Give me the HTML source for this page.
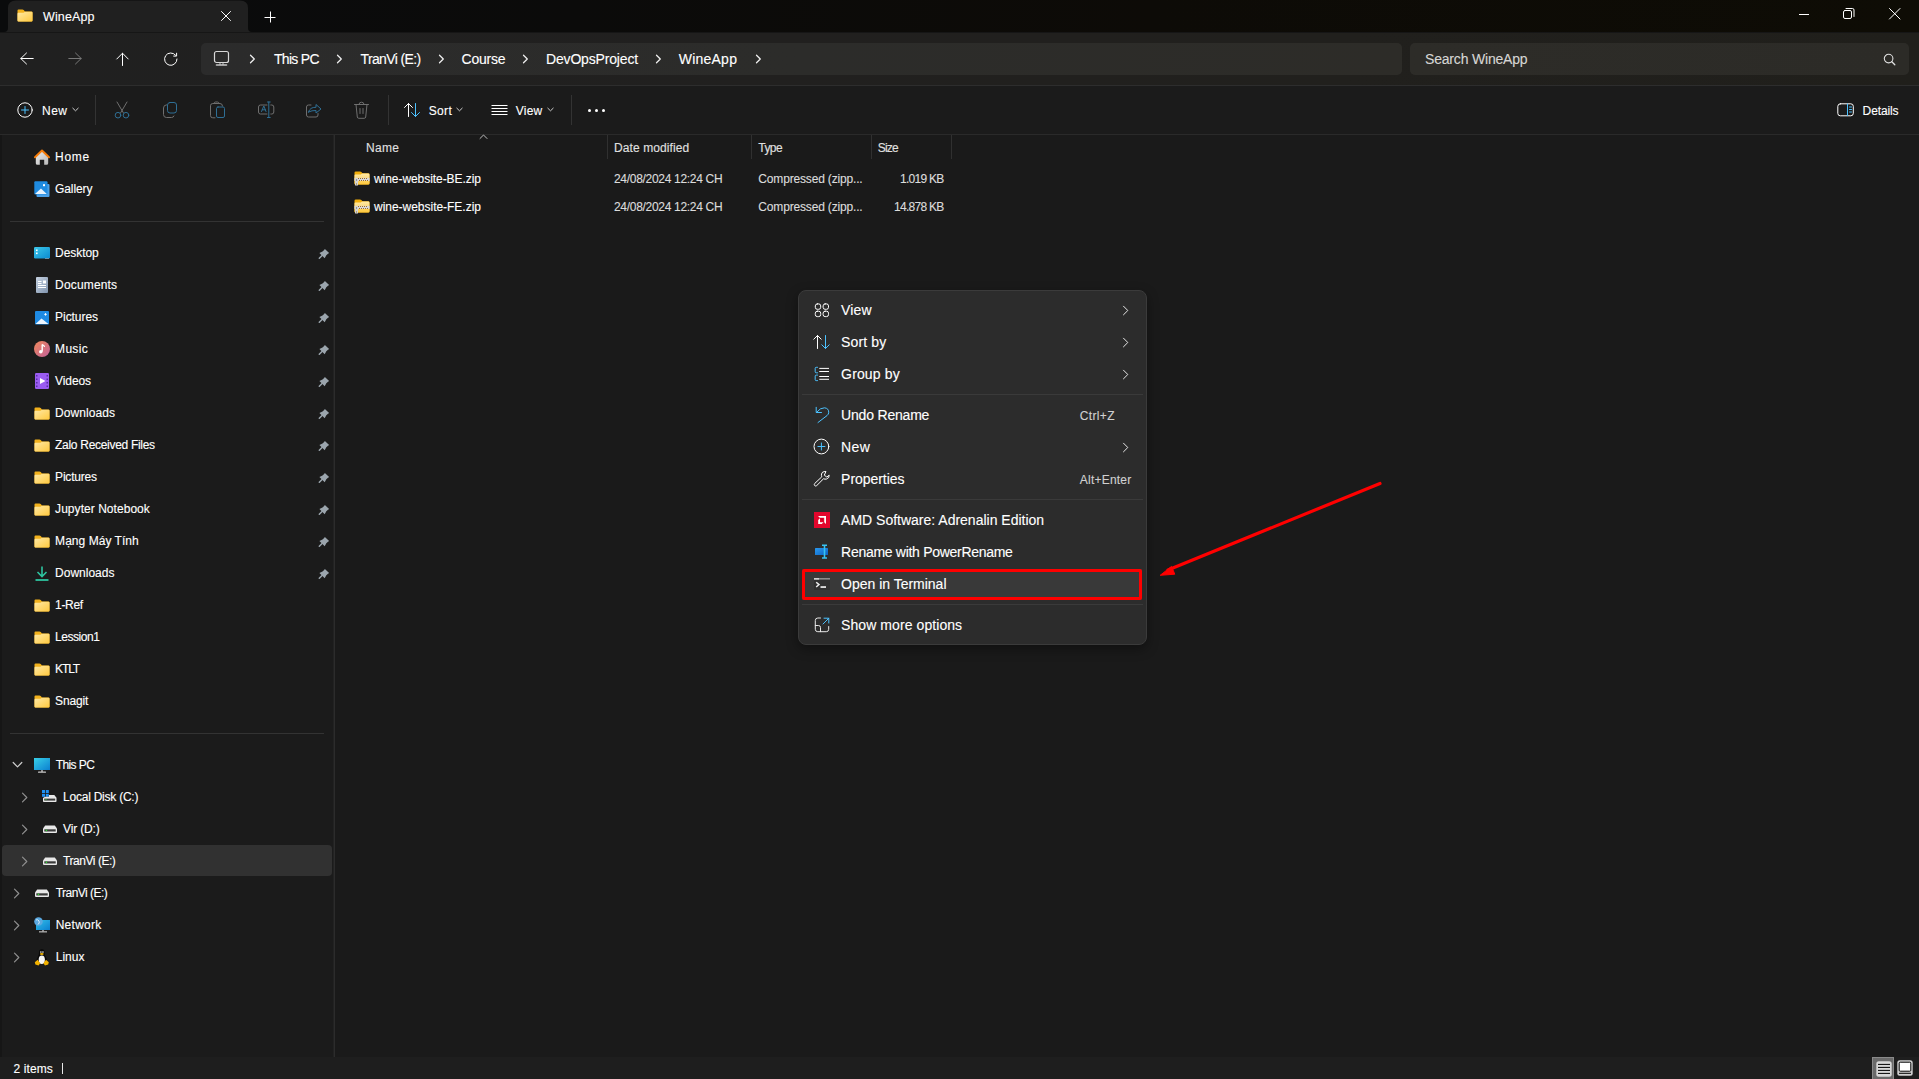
<!DOCTYPE html><html><head><meta charset="utf-8"><style>*{margin:0;padding:0;box-sizing:border-box}
html,body{width:1919px;height:1079px;overflow:hidden;background:#1a1a1a;font-family:"Liberation Sans",sans-serif;color:#fff}
.a{position:absolute}
svg.a{overflow:visible}
.t{position:absolute;white-space:nowrap;line-height:1;font-family:"Liberation Sans",sans-serif;-webkit-text-stroke:0.12px currentColor}
</style></head><body><div class="a" style="left:0px;top:0px;width:1919px;height:33px;background:linear-gradient(90deg,#0a0b0c 0%,#0b0b0a 30%,#0d0b07 60%,#0e0c05 100%);"></div><svg class="a" style="left:0px;top:0px;" width="256" height="32" viewBox="0 0 256 32" fill="none"><path d="M4 32 Q8 32 8 28 V8 Q8 0.5 16 0.5 H240 Q248 0.5 248 8 V28 Q248 32 252 32 Z" fill="#202020"/></svg><div class="a" style="left:0px;top:33px;width:1919px;height:52px;background:linear-gradient(90deg,#202020 0%,#21201f 40%,#21201d 70%,#201f1b 100%);"></div><div class="a" style="left:0px;top:32px;width:1919px;height:1px;background:#161616;"></div><div class="a" style="left:201px;top:43px;width:1201px;height:32px;background:linear-gradient(90deg,#2b2b2b 0%,#2c2c2a 50%,#2d2c28 100%);border-radius:5px"></div><div class="a" style="left:1410px;top:43px;width:499px;height:32px;background:linear-gradient(90deg,#2d2c28 0%,#2c2b27 100%);border-radius:5px"></div><div class="a" style="left:0px;top:85px;width:1919px;height:1px;background:#2d2d2d;"></div><div class="a" style="left:0px;top:86px;width:1919px;height:48px;background:#1b1b1b;"></div><div class="a" style="left:0px;top:134px;width:1919px;height:1px;background:#2a2a2a;"></div><div class="a" style="left:95px;top:95px;width:1px;height:30px;background:#333333;"></div><div class="a" style="left:388px;top:95px;width:1px;height:30px;background:#333333;"></div><div class="a" style="left:571px;top:95px;width:1px;height:30px;background:#333333;"></div><div class="a" style="left:0px;top:135px;width:334px;height:922px;background:#1b1b1b;"></div><div class="a" style="left:0px;top:135px;width:2px;height:922px;background:#161616;"></div><div class="a" style="left:333px;top:135px;width:1px;height:922px;background:#222222;"></div><div class="a" style="left:334px;top:135px;width:1px;height:922px;background:#2c2c2c;"></div><div class="a" style="left:335px;top:135px;width:1584px;height:922px;background:#1a1a1a;"></div><div class="a" style="left:10px;top:221px;width:314px;height:1px;background:#333333;"></div><div class="a" style="left:10px;top:733px;width:314px;height:1px;background:#333333;"></div><div class="a" style="left:2px;top:845px;width:330px;height:31px;background:#313131;border-radius:4px"></div><div class="a" style="left:0px;top:1057px;width:1919px;height:22px;background:#1e1e1e;"></div><div class="a" style="left:62px;top:1063px;width:1px;height:11px;background:#e8e8e8;"></div><div class="a" style="left:607px;top:135px;width:1px;height:24px;background:#303030;"></div><div class="a" style="left:751px;top:135px;width:1px;height:24px;background:#303030;"></div><div class="a" style="left:871px;top:135px;width:1px;height:24px;background:#303030;"></div><div class="a" style="left:951px;top:135px;width:1px;height:24px;background:#303030;"></div><svg class="a" style="left:17px;top:9px;" width="16" height="13" viewBox="0 0 16 13" fill="none"><defs><linearGradient id="fg" x1="0" y1="0" x2="1" y2="1"><stop offset="0" stop-color="#ffe9a6"/><stop offset="1" stop-color="#ffc93f"/></linearGradient></defs><path d="M0.5 1.5 Q0.5 0.5 1.5 0.5 H5.5 Q6.2 0.5 6.7 1 L8 2.5 H14.5 Q15.5 2.5 15.5 3.5 V11.5 Q15.5 12.5 14.5 12.5 H1.5 Q0.5 12.5 0.5 11.5 Z" fill="#f2b11c"/><path d="M0.5 4.8 Q0.5 3.8 1.5 3.8 H6.5 L8 2.8 H14.5 Q15.5 2.8 15.5 3.8 V11.5 Q15.5 12.5 14.5 12.5 H1.5 Q0.5 12.5 0.5 11.5 Z" fill="url(#fg)"/></svg><svg class="a" style="left:221px;top:11px;" width="10" height="10" viewBox="0 0 10 10" fill="none"><g stroke-linecap="round" stroke-linejoin="round" stroke-width="1"><path d="M0.5 0.5 L9.5 9.5 M9.5 0.5 L0.5 9.5" stroke="#fff"/></g></svg><svg class="a" style="left:264px;top:11px;" width="12" height="12" viewBox="0 0 12 12" fill="none"><g stroke-linecap="round" stroke-linejoin="round" stroke-width="1"><path d="M6.5 0.5 V11.5 M0.5 6.5 H11.5" stroke="#fff" stroke-linecap="butt"/></g></svg><div class="a" style="left:1799px;top:14px;width:10px;height:1px;background:#ffffff;"></div><svg class="a" style="left:1843px;top:8px;" width="12" height="12" viewBox="0 0 12 12" fill="none"><g stroke-linecap="round" stroke-linejoin="round" stroke-width="1"><rect x="0.5" y="2.5" width="8" height="8" rx="1.5" stroke="#fff"/><path d="M3 0.5 H9.5 Q11 0.5 11 2 V8.5" stroke="#fff"/></g></svg><svg class="a" style="left:1889px;top:8px;" width="12" height="12" viewBox="0 0 12 12" fill="none"><g stroke-linecap="round" stroke-linejoin="round" stroke-width="1"><path d="M0.5 0.5 L11 11 M11 0.5 L0.5 11" stroke="#fff"/></g></svg><svg class="a" style="left:19px;top:52px;" width="16" height="14" viewBox="0 0 16 14" fill="none"><g stroke-linecap="round" stroke-linejoin="round" stroke-width="1"><path d="M1.8 6.5 H14.2 M7.5 1 L1.8 6.5 L7.5 12" stroke="#fff"/></g></svg><svg class="a" style="left:67px;top:52px;" width="16" height="14" viewBox="0 0 16 14" fill="none"><g stroke-linecap="round" stroke-linejoin="round" stroke-width="1"><path d="M1.8 6.5 H14.2 M8.5 1 L14.2 6.5 L8.5 12" stroke="#787878"/></g></svg><svg class="a" style="left:115px;top:52px;" width="16" height="14" viewBox="0 0 16 14" fill="none"><g stroke-linecap="round" stroke-linejoin="round" stroke-width="1"><path d="M7.5 1.2 V13.5 M1.8 7 L7.5 1.2 L13.2 7" stroke="#fff"/></g></svg><svg class="a" style="left:163px;top:51px;" width="16" height="16" viewBox="0 0 16 16" fill="none"><g stroke-linecap="round" stroke-linejoin="round" stroke-width="1"><path d="M12.6 4.2 A6.2 6.2 0 1 0 14 8" stroke="#fff"/><path d="M13.6 2.2 V5.1 H10.7" stroke="#fff"/></g></svg><svg class="a" style="left:213px;top:50px;" width="18" height="17" viewBox="0 0 18 17" fill="none"><g stroke-linecap="round" stroke-linejoin="round" stroke-width="1"><rect x="1.5" y="1.5" width="14" height="11" rx="2" stroke="#d8d8d8" stroke-width="1.2"/><path d="M3.5 15 H13.5" stroke="#c8c8c8" stroke-width="1.6"/><path d="M7 13 V14.5 M10 13 V14.5" stroke="#c8c8c8"/></g></svg><svg class="a" style="left:249px;top:54px;" width="8" height="10" viewBox="0 0 8 10" fill="none"><g stroke-linecap="round" stroke-linejoin="round" stroke-width="1"><path d="M1.5 1.2 L5.3 5 L1.5 8.8" stroke="#f0f0f0" stroke-width="1.25"/></g></svg><svg class="a" style="left:335.5px;top:54px;" width="8" height="10" viewBox="0 0 8 10" fill="none"><g stroke-linecap="round" stroke-linejoin="round" stroke-width="1"><path d="M1.5 1.2 L5.3 5 L1.5 8.8" stroke="#f0f0f0" stroke-width="1.25"/></g></svg><svg class="a" style="left:438px;top:54px;" width="8" height="10" viewBox="0 0 8 10" fill="none"><g stroke-linecap="round" stroke-linejoin="round" stroke-width="1"><path d="M1.5 1.2 L5.3 5 L1.5 8.8" stroke="#f0f0f0" stroke-width="1.25"/></g></svg><svg class="a" style="left:521.5px;top:54px;" width="8" height="10" viewBox="0 0 8 10" fill="none"><g stroke-linecap="round" stroke-linejoin="round" stroke-width="1"><path d="M1.5 1.2 L5.3 5 L1.5 8.8" stroke="#f0f0f0" stroke-width="1.25"/></g></svg><svg class="a" style="left:654.5px;top:54px;" width="8" height="10" viewBox="0 0 8 10" fill="none"><g stroke-linecap="round" stroke-linejoin="round" stroke-width="1"><path d="M1.5 1.2 L5.3 5 L1.5 8.8" stroke="#f0f0f0" stroke-width="1.25"/></g></svg><svg class="a" style="left:754.5px;top:54px;" width="8" height="10" viewBox="0 0 8 10" fill="none"><g stroke-linecap="round" stroke-linejoin="round" stroke-width="1"><path d="M1.5 1.2 L5.3 5 L1.5 8.8" stroke="#f0f0f0" stroke-width="1.25"/></g></svg><svg class="a" style="left:1883px;top:53px;" width="14" height="14" viewBox="0 0 14 14" fill="none"><g stroke-linecap="round" stroke-linejoin="round" stroke-width="1"><circle cx="5.6" cy="5.6" r="4.3" stroke="#e0e0e0" stroke-width="1.1"/><path d="M8.8 8.8 L11.8 11.8" stroke="#e0e0e0" stroke-width="1.3"/></g></svg><svg class="a" style="left:17px;top:102px;" width="17" height="17" viewBox="0 0 17 17" fill="none"><g stroke-linecap="round" stroke-linejoin="round" stroke-width="1"><circle cx="8" cy="8" r="7.2" stroke="#fff"/><path d="M8 4.5 V11.5 M4.5 8 H11.5" stroke="#4cc2ff"/></g></svg><svg class="a" style="left:72px;top:107px;" width="8" height="6" viewBox="0 0 8 6" fill="none"><g stroke-linecap="round" stroke-linejoin="round" stroke-width="1"><path d="M0.8 1.2 L3.5 3.8 L6.2 1.2" stroke="#d0d0d0"/></g></svg><svg class="a" style="left:113px;top:101px;" width="18" height="18" viewBox="0 0 18 18" fill="none"><g stroke-linecap="round" stroke-linejoin="round" stroke-width="1"><path d="M4 1 L10.5 12 M14 1 L7.5 12" stroke="#6f6f6f"/><circle cx="5" cy="14.2" r="2.8" stroke="#2f6f95"/><circle cx="13" cy="14.2" r="2.8" stroke="#2f6f95"/></g></svg><svg class="a" style="left:162px;top:101px;" width="18" height="18" viewBox="0 0 18 18" fill="none"><g stroke-linecap="round" stroke-linejoin="round" stroke-width="1"><path d="M4.5 3.8 Q1.5 4 1.5 7 V13.5 Q1.5 16.5 4.5 16.5 H9.5 Q11.5 16.5 12 15" stroke="#6f6f6f"/><rect x="5.5" y="1.5" width="9" height="10.5" rx="2.5" stroke="#2f6f95"/></g></svg><svg class="a" style="left:209px;top:101px;" width="18" height="18" viewBox="0 0 18 18" fill="none"><g stroke-linecap="round" stroke-linejoin="round" stroke-width="1"><path d="M5 2.5 H3.8 Q1.5 2.5 1.5 4.8 V14.5 Q1.5 16.8 3.8 16.8 H6" stroke="#6f6f6f"/><path d="M5 2.5 Q5 1 6.5 1 H8.5 Q10 1 10 2.5 M10 2.5 H11 Q13.5 2.5 13.5 5" stroke="#6f6f6f"/><path d="M5.5 2.5 H9.5" stroke="#6f6f6f"/><rect x="7.5" y="6" width="8" height="10.5" rx="1.5" stroke="#2f6f95"/></g></svg><svg class="a" style="left:257px;top:101px;" width="18" height="18" viewBox="0 0 18 18" fill="none"><g stroke-linecap="round" stroke-linejoin="round" stroke-width="1"><path d="M10 4 H3.5 Q1.5 4 1.5 6 V11 Q1.5 13 3.5 13 H10 M13.8 4 H14.8 Q16.8 4 16.8 6 V11 Q16.8 13 14.8 13 H13.8" stroke="#6f6f6f"/><path d="M4.5 10.5 L6.8 5 L9 10.5 M5.3 8.8 H8.3" stroke="#2f6f95"/><path d="M11.8 1 V16.5 M10.5 1 H13.2 M10.5 16.5 H13.2" stroke="#2f6f95"/></g></svg><svg class="a" style="left:305px;top:101px;" width="18" height="18" viewBox="0 0 18 18" fill="none"><g stroke-linecap="round" stroke-linejoin="round" stroke-width="1"><path d="M6 4 H3.5 Q1.5 4 1.5 6 V14 Q1.5 16 3.5 16 H11 Q13 16 13 14 V12.5" stroke="#6f6f6f"/><path d="M3.5 11 Q5 6 11 6.3 V3.5 L16 8 L11 12 V9.5 Q7 9.3 3.5 11 Z" stroke="#2f6f95"/></g></svg><svg class="a" style="left:353px;top:101px;" width="18" height="19" viewBox="0 0 18 19" fill="none"><g stroke-linecap="round" stroke-linejoin="round" stroke-width="1"><path d="M1.5 3.5 H15.5 M6 3.3 Q6 1.2 8.5 1.2 Q11 1.2 11 3.3 M3 3.5 L4.3 16 Q4.5 17.3 5.8 17.3 H11.2 Q12.5 17.3 12.7 16 L14 3.5 M7 7.5 V12.5 M10 7.5 V12.5" stroke="#6f6f6f"/></g></svg><svg class="a" style="left:403px;top:102px;" width="19" height="16" viewBox="0 0 19 16" fill="none"><g stroke-linecap="round" stroke-linejoin="round" stroke-width="1"><path d="M5.5 14.5 V1.5 M1.5 5.5 L5.5 1.5 L9.5 5.5" stroke="#fff"/><path d="M12.5 1.5 V14.5 M8.5 10.5 L12.5 14.5 L16.5 10.5" stroke="#4cc2ff"/></g></svg><svg class="a" style="left:456px;top:107px;" width="8" height="6" viewBox="0 0 8 6" fill="none"><g stroke-linecap="round" stroke-linejoin="round" stroke-width="1"><path d="M0.8 1.2 L3.5 3.8 L6.2 1.2" stroke="#d0d0d0"/></g></svg><svg class="a" style="left:491px;top:104px;" width="18" height="12" viewBox="0 0 18 12" fill="none"><g stroke-linecap="round" stroke-linejoin="round" stroke-width="1"><path d="M0.5 1.5 H16.5 M0.5 4.5 H16.5 M0.5 7.5 H16.5 M0.5 10.5 H16.5" stroke="#fff" stroke-linecap="butt"/></g></svg><svg class="a" style="left:547px;top:107px;" width="8" height="6" viewBox="0 0 8 6" fill="none"><g stroke-linecap="round" stroke-linejoin="round" stroke-width="1"><path d="M0.8 1.2 L3.5 3.8 L6.2 1.2" stroke="#d0d0d0"/></g></svg><div class="a" style="left:588px;top:109px;width:3px;height:3px;background:#ffffff;border-radius:50%"></div><div class="a" style="left:595px;top:109px;width:3px;height:3px;background:#ffffff;border-radius:50%"></div><div class="a" style="left:602px;top:109px;width:3px;height:3px;background:#ffffff;border-radius:50%"></div><svg class="a" style="left:1837px;top:103px;" width="18" height="14" viewBox="0 0 18 14" fill="none"><g stroke-linecap="round" stroke-linejoin="round" stroke-width="1"><rect x="0.8" y="0.8" width="15.5" height="12" rx="2.5" stroke="#fff"/><path d="M10.5 1 V12.5" stroke="#4cc2ff"/><path d="M12.5 4 H14.5 M12.5 6.5 H14.5 M12.5 9 H14.5" stroke="#4cc2ff"/></g></svg><svg class="a" style="left:479px;top:133px;" width="10" height="8" viewBox="0 0 10 8" fill="none"><g stroke-linecap="round" stroke-linejoin="round" stroke-width="1"><path d="M1 5.5 L4.5 2 L8 5.5" stroke="#bdbdbd"/></g></svg><svg class="a" style="left:354px;top:171px;" width="16" height="15" viewBox="0 0 16 15" fill="none"><defs><linearGradient id="zg" x1="0" y1="0" x2="0" y2="1"><stop offset="0" stop-color="#ffeaa8"/><stop offset="1" stop-color="#ffc83a"/></linearGradient></defs><path d="M0.5 1.8 Q0.5 0.5 1.8 0.5 H6 Q6.8 0.5 7.3 1 L8.5 2.2 H14.2 Q15.5 2.2 15.5 3.5 V12.3 Q15.5 13.5 14.2 13.5 H1.8 Q0.5 13.5 0.5 12.3 Z" fill="#f2ae0a"/><path d="M0.5 4.5 Q0.5 3.6 1.5 3.6 H6.8 L8.2 2.6 H14.3 Q15.5 2.6 15.5 3.8 V12.3 Q15.5 13.5 14.3 13.5 H1.8 Q0.5 13.5 0.5 12.3 Z" fill="url(#zg)"/><rect x="0.5" y="6.8" width="15" height="3.2" fill="#d8d8de"/><g fill="#a07020"><rect x="4" y="7" width="1" height="1"/><rect x="6" y="7" width="1" height="1"/><rect x="8" y="7" width="1" height="1"/><rect x="10" y="7" width="1" height="1"/><rect x="12" y="7" width="1" height="1"/><rect x="5" y="9" width="1" height="1"/><rect x="7" y="9" width="1" height="1"/><rect x="9" y="9" width="1" height="1"/><rect x="11" y="9" width="1" height="1"/><rect x="13" y="9" width="1" height="1"/></g><rect x="1" y="7.5" width="3" height="7" rx="0.6" fill="#d4d4d4"/><rect x="2" y="8.5" width="1" height="1" fill="#555"/><rect x="2" y="12.5" width="1" height="1" fill="#8a6a20"/></svg><svg class="a" style="left:354px;top:199px;" width="16" height="15" viewBox="0 0 16 15" fill="none"><defs><linearGradient id="zg" x1="0" y1="0" x2="0" y2="1"><stop offset="0" stop-color="#ffeaa8"/><stop offset="1" stop-color="#ffc83a"/></linearGradient></defs><path d="M0.5 1.8 Q0.5 0.5 1.8 0.5 H6 Q6.8 0.5 7.3 1 L8.5 2.2 H14.2 Q15.5 2.2 15.5 3.5 V12.3 Q15.5 13.5 14.2 13.5 H1.8 Q0.5 13.5 0.5 12.3 Z" fill="#f2ae0a"/><path d="M0.5 4.5 Q0.5 3.6 1.5 3.6 H6.8 L8.2 2.6 H14.3 Q15.5 2.6 15.5 3.8 V12.3 Q15.5 13.5 14.3 13.5 H1.8 Q0.5 13.5 0.5 12.3 Z" fill="url(#zg)"/><rect x="0.5" y="6.8" width="15" height="3.2" fill="#d8d8de"/><g fill="#a07020"><rect x="4" y="7" width="1" height="1"/><rect x="6" y="7" width="1" height="1"/><rect x="8" y="7" width="1" height="1"/><rect x="10" y="7" width="1" height="1"/><rect x="12" y="7" width="1" height="1"/><rect x="5" y="9" width="1" height="1"/><rect x="7" y="9" width="1" height="1"/><rect x="9" y="9" width="1" height="1"/><rect x="11" y="9" width="1" height="1"/><rect x="13" y="9" width="1" height="1"/></g><rect x="1" y="7.5" width="3" height="7" rx="0.6" fill="#d4d4d4"/><rect x="2" y="8.5" width="1" height="1" fill="#555"/><rect x="2" y="12.5" width="1" height="1" fill="#8a6a20"/></svg><svg class="a" style="left:34px;top:149px;" width="16" height="16" viewBox="0 0 16 16" fill="none"><defs><linearGradient id="hg" x1="0" y1="0" x2="1" y2="1"><stop offset="0" stop-color="#ececec"/><stop offset="1" stop-color="#b8b8b8"/></linearGradient></defs><path d="M1.8 7.6 L8 2.2 L14.2 7.6 V14.2 Q14.2 15.8 12.6 15.8 H10.2 V10.8 H5.8 V15.8 H3.4 Q1.8 15.8 1.8 14.2 Z" fill="url(#hg)"/><path d="M1 8.2 L8 1.6 L15 8.2" stroke="#f57c0a" stroke-width="2" stroke-linejoin="round" stroke-linecap="round" fill="none"/></svg><svg class="a" style="left:34px;top:181px;" width="16" height="16" viewBox="0 0 16 16" fill="none"><rect x="2.5" y="3" width="13" height="13" rx="1" fill="#4aa0e8"/><rect x="0.3" y="0.3" width="13.2" height="13.2" rx="1" fill="#1f8be0"/><path d="M1 13 L7 7.5 L12.8 13 Z" fill="#e8f4ff"/><rect x="9" y="3.2" width="2" height="2" fill="#fff"/></svg><svg class="a" style="left:34px;top:247px;" width="16" height="12" viewBox="0 0 16 12" fill="none"><defs><linearGradient id="dg" x1="0" y1="0" x2="1" y2="1"><stop offset="0" stop-color="#3cc8ea"/><stop offset="1" stop-color="#0a8ad0"/></linearGradient></defs><rect x="0" y="0" width="16" height="11.5" rx="1.2" fill="url(#dg)"/><rect x="2" y="2.5" width="1.6" height="1.6" fill="#fff"/><rect x="2" y="5.5" width="1.6" height="1.6" fill="#fff"/><rect x="11.5" y="11" width="1" height="1" fill="#ccc"/><rect x="13.5" y="11" width="1" height="1" fill="#ccc"/></svg><svg class="a" style="left:318px;top:247px;" width="13" height="13" viewBox="0 0 13 13" fill="none"><path d="M6.9 1.9 L11.1 6.1 L9.7 6.9 L8.3 8.3 L6.7 11.3 L1.4 6.1 L4.5 4.6 L5.9 3.3 Z" fill="#9ba5ad"/><path d="M4.3 8.3 L1.3 11.3" stroke="#9ba5ad" stroke-width="1.5" stroke-linecap="round"/></svg><svg class="a" style="left:36px;top:277px;" width="12" height="16" viewBox="0 0 12 16" fill="none"><defs><linearGradient id="docg" x1="0" y1="0" x2="1" y2="1"><stop offset="0" stop-color="#c7d3e2"/><stop offset="1" stop-color="#7f93ad"/></linearGradient></defs><rect x="0" y="0" width="12" height="16" rx="1" fill="url(#docg)"/><path d="M2 4.5 H5.5 M2 6.5 H5.5 M2 8.5 H10 M2 10.5 H10" stroke="#fff" stroke-width="1"/><rect x="7" y="3.5" width="3" height="3" fill="#fff"/></svg><svg class="a" style="left:318px;top:279px;" width="13" height="13" viewBox="0 0 13 13" fill="none"><path d="M6.9 1.9 L11.1 6.1 L9.7 6.9 L8.3 8.3 L6.7 11.3 L1.4 6.1 L4.5 4.6 L5.9 3.3 Z" fill="#9ba5ad"/><path d="M4.3 8.3 L1.3 11.3" stroke="#9ba5ad" stroke-width="1.5" stroke-linecap="round"/></svg><svg class="a" style="left:35px;top:310.5px;" width="14" height="14" viewBox="0 0 14 14" fill="none"><rect x="0" y="0" width="14" height="13.5" rx="1" fill="#1e8ae3"/><path d="M0.5 13 L6.5 7.5 L13.5 13 Z" fill="#eef6ff"/><path d="M10.5 2.2 V4.6 M9.3 3.4 H11.7" stroke="#fff" stroke-width="1"/></svg><svg class="a" style="left:318px;top:311px;" width="13" height="13" viewBox="0 0 13 13" fill="none"><path d="M6.9 1.9 L11.1 6.1 L9.7 6.9 L8.3 8.3 L6.7 11.3 L1.4 6.1 L4.5 4.6 L5.9 3.3 Z" fill="#9ba5ad"/><path d="M4.3 8.3 L1.3 11.3" stroke="#9ba5ad" stroke-width="1.5" stroke-linecap="round"/></svg><svg class="a" style="left:34px;top:341px;" width="16" height="16" viewBox="0 0 16 16" fill="none"><defs><linearGradient id="mg" x1="0" y1="0" x2="1" y2="1"><stop offset="0" stop-color="#f0885a"/><stop offset="1" stop-color="#c0609a"/></linearGradient></defs><circle cx="8" cy="8" r="8" fill="url(#mg)"/><path d="M8.2 3.5 V10.5" stroke="#fff" stroke-width="1.4"/><circle cx="6.8" cy="10.8" r="1.8" fill="#fff"/><path d="M8.2 3.5 Q10.5 4.5 10.5 6" stroke="#fff" stroke-width="1.2" fill="none"/></svg><svg class="a" style="left:318px;top:343px;" width="13" height="13" viewBox="0 0 13 13" fill="none"><path d="M6.9 1.9 L11.1 6.1 L9.7 6.9 L8.3 8.3 L6.7 11.3 L1.4 6.1 L4.5 4.6 L5.9 3.3 Z" fill="#9ba5ad"/><path d="M4.3 8.3 L1.3 11.3" stroke="#9ba5ad" stroke-width="1.5" stroke-linecap="round"/></svg><svg class="a" style="left:35px;top:373px;" width="14" height="16" viewBox="0 0 14 16" fill="none"><rect x="0" y="0" width="14" height="16" rx="1.2" fill="#9a5cf0"/><path d="M5 5 L10.5 8 L5 11 Z" fill="#fff"/><g fill="#5a2ca8"><rect x="1" y="2" width="1.5" height="1.5"/><rect x="1" y="5.5" width="1.5" height="1.5"/><rect x="1" y="9" width="1.5" height="1.5"/><rect x="1" y="12.5" width="1.5" height="1.5"/><rect x="11.5" y="2" width="1.5" height="1.5"/><rect x="11.5" y="5.5" width="1.5" height="1.5"/><rect x="11.5" y="9" width="1.5" height="1.5"/><rect x="11.5" y="12.5" width="1.5" height="1.5"/></g></svg><svg class="a" style="left:318px;top:375px;" width="13" height="13" viewBox="0 0 13 13" fill="none"><path d="M6.9 1.9 L11.1 6.1 L9.7 6.9 L8.3 8.3 L6.7 11.3 L1.4 6.1 L4.5 4.6 L5.9 3.3 Z" fill="#9ba5ad"/><path d="M4.3 8.3 L1.3 11.3" stroke="#9ba5ad" stroke-width="1.5" stroke-linecap="round"/></svg><svg class="a" style="left:34px;top:407px;" width="16" height="13" viewBox="0 0 16 13" fill="none"><defs><linearGradient id="fg" x1="0" y1="0" x2="1" y2="1"><stop offset="0" stop-color="#ffe9a6"/><stop offset="1" stop-color="#ffc93f"/></linearGradient></defs><path d="M0.5 1.5 Q0.5 0.5 1.5 0.5 H5.5 Q6.2 0.5 6.7 1 L8 2.5 H14.5 Q15.5 2.5 15.5 3.5 V11.5 Q15.5 12.5 14.5 12.5 H1.5 Q0.5 12.5 0.5 11.5 Z" fill="#f2b11c"/><path d="M0.5 4.8 Q0.5 3.8 1.5 3.8 H6.5 L8 2.8 H14.5 Q15.5 2.8 15.5 3.8 V11.5 Q15.5 12.5 14.5 12.5 H1.5 Q0.5 12.5 0.5 11.5 Z" fill="url(#fg)"/></svg><svg class="a" style="left:318px;top:407px;" width="13" height="13" viewBox="0 0 13 13" fill="none"><path d="M6.9 1.9 L11.1 6.1 L9.7 6.9 L8.3 8.3 L6.7 11.3 L1.4 6.1 L4.5 4.6 L5.9 3.3 Z" fill="#9ba5ad"/><path d="M4.3 8.3 L1.3 11.3" stroke="#9ba5ad" stroke-width="1.5" stroke-linecap="round"/></svg><svg class="a" style="left:34px;top:439px;" width="16" height="13" viewBox="0 0 16 13" fill="none"><defs><linearGradient id="fg" x1="0" y1="0" x2="1" y2="1"><stop offset="0" stop-color="#ffe9a6"/><stop offset="1" stop-color="#ffc93f"/></linearGradient></defs><path d="M0.5 1.5 Q0.5 0.5 1.5 0.5 H5.5 Q6.2 0.5 6.7 1 L8 2.5 H14.5 Q15.5 2.5 15.5 3.5 V11.5 Q15.5 12.5 14.5 12.5 H1.5 Q0.5 12.5 0.5 11.5 Z" fill="#f2b11c"/><path d="M0.5 4.8 Q0.5 3.8 1.5 3.8 H6.5 L8 2.8 H14.5 Q15.5 2.8 15.5 3.8 V11.5 Q15.5 12.5 14.5 12.5 H1.5 Q0.5 12.5 0.5 11.5 Z" fill="url(#fg)"/></svg><svg class="a" style="left:318px;top:439px;" width="13" height="13" viewBox="0 0 13 13" fill="none"><path d="M6.9 1.9 L11.1 6.1 L9.7 6.9 L8.3 8.3 L6.7 11.3 L1.4 6.1 L4.5 4.6 L5.9 3.3 Z" fill="#9ba5ad"/><path d="M4.3 8.3 L1.3 11.3" stroke="#9ba5ad" stroke-width="1.5" stroke-linecap="round"/></svg><svg class="a" style="left:34px;top:471px;" width="16" height="13" viewBox="0 0 16 13" fill="none"><defs><linearGradient id="fg" x1="0" y1="0" x2="1" y2="1"><stop offset="0" stop-color="#ffe9a6"/><stop offset="1" stop-color="#ffc93f"/></linearGradient></defs><path d="M0.5 1.5 Q0.5 0.5 1.5 0.5 H5.5 Q6.2 0.5 6.7 1 L8 2.5 H14.5 Q15.5 2.5 15.5 3.5 V11.5 Q15.5 12.5 14.5 12.5 H1.5 Q0.5 12.5 0.5 11.5 Z" fill="#f2b11c"/><path d="M0.5 4.8 Q0.5 3.8 1.5 3.8 H6.5 L8 2.8 H14.5 Q15.5 2.8 15.5 3.8 V11.5 Q15.5 12.5 14.5 12.5 H1.5 Q0.5 12.5 0.5 11.5 Z" fill="url(#fg)"/></svg><svg class="a" style="left:318px;top:471px;" width="13" height="13" viewBox="0 0 13 13" fill="none"><path d="M6.9 1.9 L11.1 6.1 L9.7 6.9 L8.3 8.3 L6.7 11.3 L1.4 6.1 L4.5 4.6 L5.9 3.3 Z" fill="#9ba5ad"/><path d="M4.3 8.3 L1.3 11.3" stroke="#9ba5ad" stroke-width="1.5" stroke-linecap="round"/></svg><svg class="a" style="left:34px;top:503px;" width="16" height="13" viewBox="0 0 16 13" fill="none"><defs><linearGradient id="fg" x1="0" y1="0" x2="1" y2="1"><stop offset="0" stop-color="#ffe9a6"/><stop offset="1" stop-color="#ffc93f"/></linearGradient></defs><path d="M0.5 1.5 Q0.5 0.5 1.5 0.5 H5.5 Q6.2 0.5 6.7 1 L8 2.5 H14.5 Q15.5 2.5 15.5 3.5 V11.5 Q15.5 12.5 14.5 12.5 H1.5 Q0.5 12.5 0.5 11.5 Z" fill="#f2b11c"/><path d="M0.5 4.8 Q0.5 3.8 1.5 3.8 H6.5 L8 2.8 H14.5 Q15.5 2.8 15.5 3.8 V11.5 Q15.5 12.5 14.5 12.5 H1.5 Q0.5 12.5 0.5 11.5 Z" fill="url(#fg)"/></svg><svg class="a" style="left:318px;top:503px;" width="13" height="13" viewBox="0 0 13 13" fill="none"><path d="M6.9 1.9 L11.1 6.1 L9.7 6.9 L8.3 8.3 L6.7 11.3 L1.4 6.1 L4.5 4.6 L5.9 3.3 Z" fill="#9ba5ad"/><path d="M4.3 8.3 L1.3 11.3" stroke="#9ba5ad" stroke-width="1.5" stroke-linecap="round"/></svg><svg class="a" style="left:34px;top:535px;" width="16" height="13" viewBox="0 0 16 13" fill="none"><defs><linearGradient id="fg" x1="0" y1="0" x2="1" y2="1"><stop offset="0" stop-color="#ffe9a6"/><stop offset="1" stop-color="#ffc93f"/></linearGradient></defs><path d="M0.5 1.5 Q0.5 0.5 1.5 0.5 H5.5 Q6.2 0.5 6.7 1 L8 2.5 H14.5 Q15.5 2.5 15.5 3.5 V11.5 Q15.5 12.5 14.5 12.5 H1.5 Q0.5 12.5 0.5 11.5 Z" fill="#f2b11c"/><path d="M0.5 4.8 Q0.5 3.8 1.5 3.8 H6.5 L8 2.8 H14.5 Q15.5 2.8 15.5 3.8 V11.5 Q15.5 12.5 14.5 12.5 H1.5 Q0.5 12.5 0.5 11.5 Z" fill="url(#fg)"/></svg><svg class="a" style="left:318px;top:535px;" width="13" height="13" viewBox="0 0 13 13" fill="none"><path d="M6.9 1.9 L11.1 6.1 L9.7 6.9 L8.3 8.3 L6.7 11.3 L1.4 6.1 L4.5 4.6 L5.9 3.3 Z" fill="#9ba5ad"/><path d="M4.3 8.3 L1.3 11.3" stroke="#9ba5ad" stroke-width="1.5" stroke-linecap="round"/></svg><svg class="a" style="left:34px;top:566px;" width="16" height="15" viewBox="0 0 16 15" fill="none"><path d="M8 0.5 V10 M3.5 6 L8 10.5 L12.5 6" stroke="#2ec4a0" stroke-width="1.6" fill="none"/><path d="M1.5 14 H14.5" stroke="#2ec4a0" stroke-width="1.8"/></svg><svg class="a" style="left:318px;top:567px;" width="13" height="13" viewBox="0 0 13 13" fill="none"><path d="M6.9 1.9 L11.1 6.1 L9.7 6.9 L8.3 8.3 L6.7 11.3 L1.4 6.1 L4.5 4.6 L5.9 3.3 Z" fill="#9ba5ad"/><path d="M4.3 8.3 L1.3 11.3" stroke="#9ba5ad" stroke-width="1.5" stroke-linecap="round"/></svg><svg class="a" style="left:34px;top:599px;" width="16" height="13" viewBox="0 0 16 13" fill="none"><defs><linearGradient id="fg" x1="0" y1="0" x2="1" y2="1"><stop offset="0" stop-color="#ffe9a6"/><stop offset="1" stop-color="#ffc93f"/></linearGradient></defs><path d="M0.5 1.5 Q0.5 0.5 1.5 0.5 H5.5 Q6.2 0.5 6.7 1 L8 2.5 H14.5 Q15.5 2.5 15.5 3.5 V11.5 Q15.5 12.5 14.5 12.5 H1.5 Q0.5 12.5 0.5 11.5 Z" fill="#f2b11c"/><path d="M0.5 4.8 Q0.5 3.8 1.5 3.8 H6.5 L8 2.8 H14.5 Q15.5 2.8 15.5 3.8 V11.5 Q15.5 12.5 14.5 12.5 H1.5 Q0.5 12.5 0.5 11.5 Z" fill="url(#fg)"/></svg><svg class="a" style="left:34px;top:631px;" width="16" height="13" viewBox="0 0 16 13" fill="none"><defs><linearGradient id="fg" x1="0" y1="0" x2="1" y2="1"><stop offset="0" stop-color="#ffe9a6"/><stop offset="1" stop-color="#ffc93f"/></linearGradient></defs><path d="M0.5 1.5 Q0.5 0.5 1.5 0.5 H5.5 Q6.2 0.5 6.7 1 L8 2.5 H14.5 Q15.5 2.5 15.5 3.5 V11.5 Q15.5 12.5 14.5 12.5 H1.5 Q0.5 12.5 0.5 11.5 Z" fill="#f2b11c"/><path d="M0.5 4.8 Q0.5 3.8 1.5 3.8 H6.5 L8 2.8 H14.5 Q15.5 2.8 15.5 3.8 V11.5 Q15.5 12.5 14.5 12.5 H1.5 Q0.5 12.5 0.5 11.5 Z" fill="url(#fg)"/></svg><svg class="a" style="left:34px;top:663px;" width="16" height="13" viewBox="0 0 16 13" fill="none"><defs><linearGradient id="fg" x1="0" y1="0" x2="1" y2="1"><stop offset="0" stop-color="#ffe9a6"/><stop offset="1" stop-color="#ffc93f"/></linearGradient></defs><path d="M0.5 1.5 Q0.5 0.5 1.5 0.5 H5.5 Q6.2 0.5 6.7 1 L8 2.5 H14.5 Q15.5 2.5 15.5 3.5 V11.5 Q15.5 12.5 14.5 12.5 H1.5 Q0.5 12.5 0.5 11.5 Z" fill="#f2b11c"/><path d="M0.5 4.8 Q0.5 3.8 1.5 3.8 H6.5 L8 2.8 H14.5 Q15.5 2.8 15.5 3.8 V11.5 Q15.5 12.5 14.5 12.5 H1.5 Q0.5 12.5 0.5 11.5 Z" fill="url(#fg)"/></svg><svg class="a" style="left:34px;top:695px;" width="16" height="13" viewBox="0 0 16 13" fill="none"><defs><linearGradient id="fg" x1="0" y1="0" x2="1" y2="1"><stop offset="0" stop-color="#ffe9a6"/><stop offset="1" stop-color="#ffc93f"/></linearGradient></defs><path d="M0.5 1.5 Q0.5 0.5 1.5 0.5 H5.5 Q6.2 0.5 6.7 1 L8 2.5 H14.5 Q15.5 2.5 15.5 3.5 V11.5 Q15.5 12.5 14.5 12.5 H1.5 Q0.5 12.5 0.5 11.5 Z" fill="#f2b11c"/><path d="M0.5 4.8 Q0.5 3.8 1.5 3.8 H6.5 L8 2.8 H14.5 Q15.5 2.8 15.5 3.8 V11.5 Q15.5 12.5 14.5 12.5 H1.5 Q0.5 12.5 0.5 11.5 Z" fill="url(#fg)"/></svg><svg class="a" style="left:12px;top:761px;" width="11" height="8" viewBox="0 0 11 8" fill="none"><g stroke-linecap="round" stroke-linejoin="round" stroke-width="1"><path d="M1.2 1.5 L5.5 5.8 L9.8 1.5" stroke="#cfcfcf" stroke-width="1.2"/></g></svg><svg class="a" style="left:34px;top:758px;" width="16" height="15" viewBox="0 0 16 15" fill="none"><defs><linearGradient id="pcg" x1="0" y1="0" x2="1" y2="1"><stop offset="0" stop-color="#38d0e8"/><stop offset="1" stop-color="#0b7fd0"/></linearGradient></defs><rect x="0" y="0" width="16" height="12" fill="url(#pcg)"/><rect x="7.3" y="12" width="1.4" height="2" fill="#c0c0c0"/><rect x="4" y="13.6" width="8" height="1.2" rx="0.5" fill="#c8c8c8"/></svg><svg class="a" style="left:21px;top:792px;" width="8" height="11" viewBox="0 0 8 11" fill="none"><g stroke-linecap="round" stroke-linejoin="round" stroke-width="1"><path d="M1.5 1.2 L5.8 5.5 L1.5 9.8" stroke="#8f8f8f" stroke-width="1.2"/></g></svg><svg class="a" style="left:42px;top:790px;" width="15" height="12" viewBox="0 0 15 12" fill="none"><g fill="#1e90f0"><rect x="0" y="0" width="3" height="3"/><rect x="3.8" y="0" width="3" height="3"/><rect x="0" y="3.8" width="3" height="3"/><rect x="3.8" y="3.8" width="3" height="3"/></g><path d="M7 5 H12.3 L14.5 7.8 V11.2 Q14.5 12 13.7 12 H1.8 Q1 12 1 11.2 V8 L3 6.8 H7 Z" fill="#e8e8e8"/><rect x="2.2" y="8.6" width="11" height="2" fill="#3a3a3a"/><circle cx="4" cy="9.6" r="0.7" fill="#35d435"/></svg><svg class="a" style="left:21px;top:824px;" width="8" height="11" viewBox="0 0 8 11" fill="none"><g stroke-linecap="round" stroke-linejoin="round" stroke-width="1"><path d="M1.5 1.2 L5.8 5.5 L1.5 9.8" stroke="#8f8f8f" stroke-width="1.2"/></g></svg><svg class="a" style="left:43px;top:825px;" width="14" height="8" viewBox="0 0 14 8" fill="none"><path d="M2.2 0.5 H11.8 L14 3.5 V7 Q14 8 13 8 H1 Q0 8 0 7 V3.5 Z" fill="#e8e8e8"/><rect x="1.3" y="4.3" width="11.4" height="2.2" fill="#3a3a3a"/><circle cx="3.4" cy="5.4" r="0.8" fill="#35d435"/></svg><svg class="a" style="left:21px;top:856px;" width="8" height="11" viewBox="0 0 8 11" fill="none"><g stroke-linecap="round" stroke-linejoin="round" stroke-width="1"><path d="M1.5 1.2 L5.8 5.5 L1.5 9.8" stroke="#8f8f8f" stroke-width="1.2"/></g></svg><svg class="a" style="left:43px;top:857px;" width="14" height="8" viewBox="0 0 14 8" fill="none"><path d="M2.2 0.5 H11.8 L14 3.5 V7 Q14 8 13 8 H1 Q0 8 0 7 V3.5 Z" fill="#e8e8e8"/><rect x="1.3" y="4.3" width="11.4" height="2.2" fill="#3a3a3a"/><circle cx="3.4" cy="5.4" r="0.8" fill="#35d435"/></svg><svg class="a" style="left:13px;top:888px;" width="8" height="11" viewBox="0 0 8 11" fill="none"><g stroke-linecap="round" stroke-linejoin="round" stroke-width="1"><path d="M1.5 1.2 L5.8 5.5 L1.5 9.8" stroke="#8f8f8f" stroke-width="1.2"/></g></svg><svg class="a" style="left:35px;top:889px;" width="14" height="8" viewBox="0 0 14 8" fill="none"><path d="M2.2 0.5 H11.8 L14 3.5 V7 Q14 8 13 8 H1 Q0 8 0 7 V3.5 Z" fill="#e8e8e8"/><rect x="1.3" y="4.3" width="11.4" height="2.2" fill="#3a3a3a"/><circle cx="3.4" cy="5.4" r="0.8" fill="#35d435"/></svg><svg class="a" style="left:13px;top:920px;" width="8" height="11" viewBox="0 0 8 11" fill="none"><g stroke-linecap="round" stroke-linejoin="round" stroke-width="1"><path d="M1.5 1.2 L5.8 5.5 L1.5 9.8" stroke="#8f8f8f" stroke-width="1.2"/></g></svg><svg class="a" style="left:34px;top:917px;" width="16" height="16" viewBox="0 0 16 16" fill="none"><defs><linearGradient id="ng" x1="0" y1="0" x2="1" y2="1"><stop offset="0" stop-color="#34c0e8"/><stop offset="1" stop-color="#0b7fd0"/></linearGradient></defs><rect x="2" y="3" width="14" height="10" fill="url(#ng)"/><rect x="8.3" y="13" width="1.4" height="1.5" fill="#c0c0c0"/><rect x="5" y="14.3" width="8" height="1.1" fill="#c8c8c8"/><circle cx="4.5" cy="4.5" r="4.3" fill="#5aa8e0"/><path d="M2 3 Q4 2 5 4 Q6 6 4 7.5" stroke="#d8ecf8" stroke-width="1" fill="none"/></svg><svg class="a" style="left:13px;top:952px;" width="8" height="11" viewBox="0 0 8 11" fill="none"><g stroke-linecap="round" stroke-linejoin="round" stroke-width="1"><path d="M1.5 1.2 L5.8 5.5 L1.5 9.8" stroke="#8f8f8f" stroke-width="1.2"/></g></svg><svg class="a" style="left:34px;top:949px;" width="16" height="17" viewBox="0 0 16 17" fill="none"><path d="M7.8 0.3 Q10.6 0.3 10.6 3.5 Q10.6 6 12 8.5 Q14 12 12.5 14.5 H3.2 Q1.6 12 3.6 8.5 Q5 6 5 3.5 Q5 0.3 7.8 0.3 Z" fill="#080808"/><ellipse cx="7.8" cy="10.8" rx="3.1" ry="4.3" fill="#f6f6f6"/><rect x="6.2" y="2.3" width="1.3" height="1.5" fill="#ddd"/><rect x="8.3" y="2.3" width="1.3" height="1.5" fill="#ddd"/><ellipse cx="7.8" cy="5" rx="1.9" ry="1.1" fill="#f0b400"/><path d="M0.8 13.2 L3.6 10.8 L6.2 14.2 L4.6 16.4 L1.4 15.6 Z M14.8 13.2 L12 10.8 L9.4 14.2 L11 16.4 L14.2 15.6 Z" fill="#f2b200"/></svg><div class="a" style="left:798px;top:290px;width:349px;height:355px;background:#2c2c2c;border:1px solid #3b3b3b;border-radius:8px;box-shadow:0 4px 12px rgba(0,0,0,0.38)"></div><div class="a" style="left:802px;top:394px;width:341px;height:1px;background:#3a3a3a;"></div><div class="a" style="left:802px;top:499px;width:341px;height:1px;background:#3a3a3a;"></div><div class="a" style="left:802px;top:604px;width:341px;height:1px;background:#3a3a3a;"></div><div class="a" style="left:802px;top:569px;width:340px;height:31px;background:#393939;border-radius:1px"></div><div class="a" style="left:802px;top:569px;width:340px;height:31px;background:transparent;border:3px solid #ff0000;border-radius:2px"></div><svg class="a" style="left:814px;top:303px;" width="16" height="15" viewBox="0 0 16 15" fill="none"><g stroke-linecap="round" stroke-linejoin="round" stroke-width="1"><rect x="1.3" y="0.9" width="5.4" height="5.4" rx="2" stroke="#fff"/><rect x="9.1" y="0.9" width="5.4" height="5.4" rx="2" stroke="#fff"/><rect x="1.3" y="8.2" width="5.4" height="5.4" rx="2" stroke="#fff"/><rect x="9.1" y="8.2" width="5.4" height="5.4" rx="2" stroke="#fff"/></g></svg><svg class="a" style="left:813px;top:334px;" width="18" height="16" viewBox="0 0 18 16" fill="none"><g stroke-linecap="round" stroke-linejoin="round" stroke-width="1"><path d="M4.5 14.5 V1.5 M0.8 5.2 L4.5 1.5 L8.2 5.2" stroke="#fff"/><path d="M12.5 1.5 V14.5 M8.8 10.8 L12.5 14.5 L16.2 10.8" stroke="#4cc2ff"/></g></svg><svg class="a" style="left:814px;top:366px;" width="16" height="16" viewBox="0 0 16 16" fill="none"><g stroke-linecap="round" stroke-linejoin="round" stroke-width="1"><path d="M3.5 1.3 H2.2 Q1.2 1.3 1.2 2.3 V5.8 Q1.2 6.8 2.2 6.8 H3.5 M3.5 9.1 H2.2 Q1.2 9.1 1.2 10.1 V13.6 Q1.2 14.6 2.2 14.6 H3.5" stroke="#4cc2ff"/><path d="M5.3 2.4 H15 M5.3 5.5 H15 M5.3 10.5 H15 M5.3 13.3 H15" stroke="#fff" stroke-linecap="butt"/></g></svg><svg class="a" style="left:814px;top:406px;" width="17" height="18" viewBox="0 0 17 18" fill="none"><g stroke-linecap="round" stroke-linejoin="round" stroke-width="1"><path d="M2.2 1.3 V6.5 H7.5" stroke="#4cc2ff"/><path d="M2.5 6.3 Q6.5 1.5 10.5 1.8 Q15 2.3 14.7 6.8 Q14.6 8.2 13 9.6 L4 16.5" stroke="#4cc2ff"/></g></svg><svg class="a" style="left:813px;top:438px;" width="17" height="17" viewBox="0 0 17 17" fill="none"><g stroke-linecap="round" stroke-linejoin="round" stroke-width="1"><circle cx="8.4" cy="8.5" r="7.4" stroke="#fff"/><path d="M8.4 5 V12 M4.9 8.5 H11.9" stroke="#4cc2ff"/></g></svg><svg class="a" style="left:813px;top:470px;" width="18" height="18" viewBox="0 0 18 18" fill="none"><g stroke-linecap="round" stroke-linejoin="round" stroke-width="1"><path d="M11.5 1.5 Q9 1.5 8.5 4 Q8.2 5.5 8.8 6.8 L1.7 13.5 Q0.8 14.5 1.7 15.6 Q2.7 16.5 3.7 15.6 L10.5 8.8 Q12 9.4 13.5 9 Q16.5 8 16.2 5.2 L13.8 7 L11.3 5.2 L12.8 1.8 Z" stroke="#fff" stroke-width="1"/></g></svg><svg class="a" style="left:814px;top:512px;" width="16" height="16" viewBox="0 0 16 16" fill="none"><rect width="16" height="16" fill="#e3072d"/><path d="M4 4 H12 V12 L10.2 10.2 V5.8 H5.8 Z" fill="#fff"/><path d="M4 7 L6.5 9.5 H9 V7 L5 5.5 Z" fill="#fff" opacity="0"/><path d="M4.2 12 V8 L6 6.3 V10.2 H9.5 L7.8 12 Z" fill="#fff"/><path d="M6 6.2 L9 6.2 L9 9 Z" fill="#c8001f"/></svg><svg class="a" style="left:814px;top:544px;" width="16" height="16" viewBox="0 0 16 16" fill="none"><defs><linearGradient id="prg" x1="0" y1="0" x2="1" y2="1"><stop offset="0" stop-color="#2a9af0"/><stop offset="1" stop-color="#0d62c0"/></linearGradient></defs><rect x="1" y="4" width="13" height="7" rx="0.6" fill="url(#prg)"/><path d="M8 1.3 H13 M10.5 1.3 V14 M8 14 H13" stroke="#36c4f4" stroke-width="1.6"/></svg><svg class="a" style="left:814px;top:578px;" width="16" height="12" viewBox="0 0 16 12" fill="none"><rect x="0" y="0" width="16" height="12" fill="#303030"/><rect x="0" y="0" width="16" height="1.6" fill="#8c8c8c"/><rect x="0" y="0" width="5" height="1.6" fill="#d0d0d0"/><path d="M2.2 4.2 L5 6.6 L2.2 9" stroke="#ececec" stroke-width="1.5" fill="none"/><rect x="6.5" y="8.2" width="5.5" height="1.7" fill="#ececec"/></svg><svg class="a" style="left:814px;top:617px;" width="17" height="16" viewBox="0 0 17 16" fill="none"><g stroke-linecap="round" stroke-linejoin="round" stroke-width="1"><path d="M6.5 1 H3.8 Q1.3 1 1.3 3.5 V12.3 Q1.3 14.7 3.8 14.7 H12.3 Q14.7 14.7 14.7 12.3 V9.5" stroke="#e8e8e8"/><path d="M1.3 8.5 H4.5 Q6.5 8.5 6.5 10.5 V14.7" stroke="#e8e8e8"/><path d="M9 7 L14.8 1.2 M10 1.2 H14.8 V6" stroke="#4cc2ff"/></g></svg><svg class="a" style="left:1122px;top:305px;" width="8" height="11" viewBox="0 0 8 11" fill="none"><g stroke-linecap="round" stroke-linejoin="round" stroke-width="1"><path d="M1.5 1.2 L5.8 5.5 L1.5 9.8" stroke="#e8e8e8"/></g></svg><svg class="a" style="left:1122px;top:337px;" width="8" height="11" viewBox="0 0 8 11" fill="none"><g stroke-linecap="round" stroke-linejoin="round" stroke-width="1"><path d="M1.5 1.2 L5.8 5.5 L1.5 9.8" stroke="#e8e8e8"/></g></svg><svg class="a" style="left:1122px;top:369px;" width="8" height="11" viewBox="0 0 8 11" fill="none"><g stroke-linecap="round" stroke-linejoin="round" stroke-width="1"><path d="M1.5 1.2 L5.8 5.5 L1.5 9.8" stroke="#e8e8e8"/></g></svg><svg class="a" style="left:1122px;top:442px;" width="8" height="11" viewBox="0 0 8 11" fill="none"><g stroke-linecap="round" stroke-linejoin="round" stroke-width="1"><path d="M1.5 1.2 L5.8 5.5 L1.5 9.8" stroke="#e8e8e8"/></g></svg><svg class="a" style="left:1150px;top:470px;" width="250" height="120" viewBox="0 0 250 120" fill="none"><path d="M230 13.5 L18 100" stroke="#ff0000" stroke-width="3.2" stroke-linecap="round"/><path d="M10.2 105.3 L21.5 96.4 L24.8 104.2 Z" fill="#ff0000" stroke="#ff0000" stroke-width="1" stroke-linejoin="round"/></svg><div class="a" style="left:1872px;top:1057px;width:22px;height:22px;background:#6a6a6a;border:1px solid #8a8a8a;border-bottom:none"></div><svg class="a" style="left:1876px;top:1061px;" width="16" height="16" viewBox="0 0 16 16" fill="none"><rect x="0.3" y="0.3" width="15.4" height="15.4" rx="2.5" fill="#d8d8d8"/><path d="M2 3.4 H14 M2 6.4 H14 M2 9.4 H14 M2 12.4 H14" stroke="#000" stroke-width="1"/></svg><svg class="a" style="left:1897px;top:1060px;" width="16" height="16" viewBox="0 0 16 16" fill="none"><rect x="0.3" y="0.3" width="15.4" height="15.4" rx="2.5" fill="#cfcfcf"/><rect x="2.2" y="2.2" width="11.6" height="9" rx="1" fill="#fff" stroke="#000" stroke-width="1"/><path d="M2 13.3 H14" stroke="#000" stroke-width="1"/></svg><div class="t" id="t0" style="left:43.00px;top:11.42px;font-size:12.5px;color:#ffffff;letter-spacing:0.128px;">WineApp</div><div class="t" id="t1" style="left:274.00px;top:52.15px;font-size:14px;color:#ffffff;letter-spacing:-0.696px;">This PC</div><div class="t" id="t2" style="left:360.50px;top:52.15px;font-size:14px;color:#ffffff;letter-spacing:-0.629px;">TranVi (E:)</div><div class="t" id="t3" style="left:461.50px;top:52.15px;font-size:14px;color:#ffffff;letter-spacing:-0.204px;">Course</div><div class="t" id="t4" style="left:546.00px;top:52.15px;font-size:14px;color:#ffffff;letter-spacing:-0.170px;">DevOpsProject</div><div class="t" id="t5" style="left:678.80px;top:52.15px;font-size:14px;color:#ffffff;letter-spacing:0.218px;">WineApp</div><div class="t" id="t6" style="left:1425.00px;top:52.15px;font-size:14px;color:#d6d6d4;letter-spacing:-0.188px;">Search WineApp</div><div class="t" id="t7" style="left:42.00px;top:104.84px;font-size:12px;color:#ffffff;letter-spacing:0.472px;">New</div><div class="t" id="t8" style="left:428.80px;top:104.84px;font-size:12px;color:#ffffff;letter-spacing:0.315px;">Sort</div><div class="t" id="t9" style="left:515.80px;top:104.84px;font-size:12px;color:#ffffff;letter-spacing:0.221px;">View</div><div class="t" id="t10" style="left:1862.60px;top:105.34px;font-size:12px;color:#ffffff;letter-spacing:-0.121px;">Details</div><div class="t" id="t11" style="left:366.00px;top:142.34px;font-size:12px;color:#e0e0e0;letter-spacing:0.315px;">Name</div><div class="t" id="t12" style="left:614.00px;top:142.34px;font-size:12px;color:#e0e0e0;letter-spacing:0.101px;">Date modified</div><div class="t" id="t13" style="left:758.30px;top:142.34px;font-size:12px;color:#e0e0e0;letter-spacing:-0.552px;">Type</div><div class="t" id="t14" style="left:877.70px;top:142.34px;font-size:12px;color:#e0e0e0;letter-spacing:-0.795px;">Size</div><div class="t" id="t15" style="left:374.00px;top:173.14px;font-size:12px;color:#ffffff;letter-spacing:-0.060px;">wine-website-BE.zip</div><div class="t" id="t16" style="left:614.00px;top:173.14px;font-size:12px;color:#dcdcdc;letter-spacing:-0.302px;">24/08/2024 12:24 CH</div><div class="t" id="t17" style="left:758.30px;top:173.14px;font-size:12px;color:#dcdcdc;letter-spacing:-0.168px;">Compressed (zipp...</div><div class="t" id="t18" style="left:900.00px;top:173.14px;font-size:12px;color:#dcdcdc;letter-spacing:-0.731px;">1.019 KB</div><div class="t" id="t19" style="left:374.00px;top:201.14px;font-size:12px;color:#ffffff;letter-spacing:-0.023px;">wine-website-FE.zip</div><div class="t" id="t20" style="left:614.00px;top:201.14px;font-size:12px;color:#dcdcdc;letter-spacing:-0.302px;">24/08/2024 12:24 CH</div><div class="t" id="t21" style="left:758.30px;top:201.14px;font-size:12px;color:#dcdcdc;letter-spacing:-0.168px;">Compressed (zipp...</div><div class="t" id="t22" style="left:894.00px;top:201.14px;font-size:12px;color:#dcdcdc;letter-spacing:-0.723px;">14.878 KB</div><div class="t" id="t23" style="left:55.00px;top:150.84px;font-size:12px;color:#ffffff;letter-spacing:0.748px;">Home</div><div class="t" id="t24" style="left:55.00px;top:182.84px;font-size:12px;color:#ffffff;letter-spacing:-0.093px;">Gallery</div><div class="t" id="t25" style="left:55.10px;top:246.84px;font-size:12px;color:#ffffff;letter-spacing:-0.062px;">Desktop</div><div class="t" id="t26" style="left:55.10px;top:278.84px;font-size:12px;color:#ffffff;letter-spacing:0.157px;">Documents</div><div class="t" id="t27" style="left:55.10px;top:310.84px;font-size:12px;color:#ffffff;letter-spacing:-0.057px;">Pictures</div><div class="t" id="t28" style="left:55.10px;top:342.84px;font-size:12px;color:#ffffff;letter-spacing:0.304px;">Music</div><div class="t" id="t29" style="left:55.10px;top:374.84px;font-size:12px;color:#ffffff;letter-spacing:-0.105px;">Videos</div><div class="t" id="t30" style="left:55.10px;top:406.84px;font-size:12px;color:#ffffff;letter-spacing:0.073px;">Downloads</div><div class="t" id="t31" style="left:55.10px;top:438.84px;font-size:12px;color:#ffffff;letter-spacing:-0.301px;">Zalo Received Files</div><div class="t" id="t32" style="left:55.10px;top:470.84px;font-size:12px;color:#ffffff;letter-spacing:-0.200px;">Pictures</div><div class="t" id="t33" style="left:55.10px;top:502.84px;font-size:12px;color:#ffffff;letter-spacing:0.046px;">Jupyter Notebook</div><div class="t" id="t34" style="left:55.10px;top:534.84px;font-size:12px;color:#ffffff;letter-spacing:0.042px;">Mạng Máy Tính</div><div class="t" id="t35" style="left:55.10px;top:566.84px;font-size:12px;color:#ffffff;letter-spacing:-0.002px;">Downloads</div><div class="t" id="t36" style="left:55.10px;top:598.84px;font-size:12px;color:#ffffff;letter-spacing:-0.321px;">1-Ref</div><div class="t" id="t37" style="left:55.10px;top:630.84px;font-size:12px;color:#ffffff;letter-spacing:-0.470px;">Lession1</div><div class="t" id="t38" style="left:55.10px;top:662.84px;font-size:12px;color:#ffffff;letter-spacing:-1.131px;">KTLT</div><div class="t" id="t39" style="left:55.10px;top:694.84px;font-size:12px;color:#ffffff;letter-spacing:-0.134px;">Snagit</div><div class="t" id="t40" style="left:55.70px;top:758.84px;font-size:12px;color:#ffffff;letter-spacing:-0.588px;">This PC</div><div class="t" id="t41" style="left:63.10px;top:790.84px;font-size:12px;color:#ffffff;letter-spacing:-0.238px;">Local Disk (C:)</div><div class="t" id="t42" style="left:63.10px;top:822.84px;font-size:12px;color:#ffffff;letter-spacing:-0.174px;">Vir (D:)</div><div class="t" id="t43" style="left:63.10px;top:854.84px;font-size:12px;color:#ffffff;letter-spacing:-0.460px;">TranVi (E:)</div><div class="t" id="t44" style="left:55.70px;top:886.84px;font-size:12px;color:#ffffff;letter-spacing:-0.530px;">TranVi (E:)</div><div class="t" id="t45" style="left:55.70px;top:918.84px;font-size:12px;color:#ffffff;letter-spacing:0.257px;">Network</div><div class="t" id="t46" style="left:55.70px;top:950.84px;font-size:12px;color:#ffffff;letter-spacing:0.018px;">Linux</div><div class="t" id="t47" style="left:13.60px;top:1062.84px;font-size:12px;color:#ffffff;letter-spacing:0.079px;">2 items</div><div class="t" id="t48" style="left:841.10px;top:303.35px;font-size:14px;color:#ffffff;letter-spacing:0.109px;">View</div><div class="t" id="t49" style="left:841.10px;top:335.35px;font-size:14px;color:#ffffff;letter-spacing:0.127px;">Sort by</div><div class="t" id="t50" style="left:841.10px;top:367.35px;font-size:14px;color:#ffffff;letter-spacing:0.147px;">Group by</div><div class="t" id="t51" style="left:841.10px;top:408.35px;font-size:14px;color:#ffffff;letter-spacing:-0.196px;">Undo Rename</div><div class="t" id="t52" style="left:841.10px;top:440.35px;font-size:14px;color:#ffffff;letter-spacing:0.352px;">New</div><div class="t" id="t53" style="left:841.10px;top:472.35px;font-size:14px;color:#ffffff;letter-spacing:-0.044px;">Properties</div><div class="t" id="t54" style="left:841.10px;top:513.35px;font-size:14px;color:#ffffff;letter-spacing:-0.003px;">AMD Software: Adrenalin Edition</div><div class="t" id="t55" style="left:841.10px;top:545.35px;font-size:14px;color:#ffffff;letter-spacing:-0.290px;">Rename with PowerRename</div><div class="t" id="t56" style="left:841.10px;top:577.35px;font-size:14px;color:#ffffff;letter-spacing:-0.011px;">Open in Terminal</div><div class="t" id="t57" style="left:841.10px;top:618.35px;font-size:14px;color:#ffffff;letter-spacing:0.074px;">Show more options</div><div class="t" id="t58" style="left:1079.80px;top:409.84px;font-size:12px;color:#d0d0d0;letter-spacing:0.352px;">Ctrl+Z</div><div class="t" id="t59" style="left:1079.80px;top:473.94px;font-size:12px;color:#d0d0d0;letter-spacing:0.220px;">Alt+Enter</div></body></html>
